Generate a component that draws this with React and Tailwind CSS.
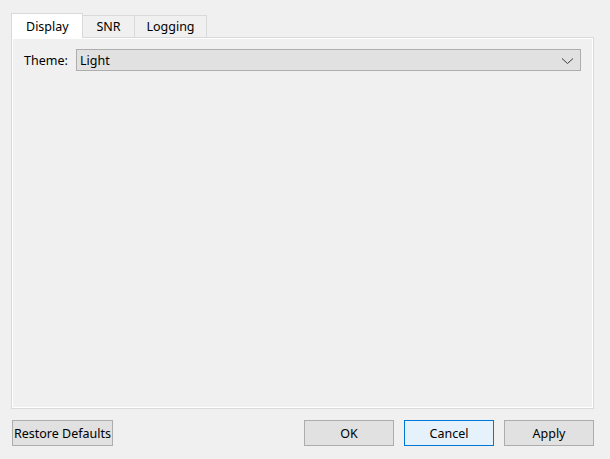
import { useState } from 'react';

const font = { fontFamily: '"Segoe UI", "Noto Sans", "Liberation Sans", sans-serif' };

function Tab({ label, active, onClick, className }) {
  if (active) {
    return (
      <button
        className={`relative z-10 -mb-px h-[25px] border border-b-0 border-[#d9d9d9] bg-white px-[14px] pt-[2px] text-[12.5px] text-black ${className}`}
        onClick={onClick}
      >
        {label}
      </button>
    );
  }
  return (
    <button
      className={`h-[22px] border-t border-r border-[#d9d9d9] bg-[#f0f0f0] pt-px text-[12.5px] text-black ${className}`}
      onClick={onClick}
    >
      {label}
    </button>
  );
}

function Button({ children, primary, className = '' }) {
  return (
    <button
      className={`h-[26px] border pt-[2px] text-[12.5px] text-black ${
        primary
          ? 'border-[#0078d7] bg-[#e5f1fb]'
          : 'border-[#adadad] bg-[#e1e1e1]'
      } ${className}`}
    >
      {children}
    </button>
  );
}

export default function App() {
  const [tab, setTab] = useState('Display');

  return (
    <div
      className="flex h-[459px] w-[610px] flex-col bg-[#f0f0f0] pt-[13px] pl-[11px] pr-[16px]"
      style={font}
    >
      <div className="flex items-end">
        <Tab
          label="Display"
          active={tab === 'Display'}
          onClick={() => setTab('Display')}
          className="w-[72px]"
        />
        <Tab
          label="SNR"
          active={tab === 'SNR'}
          onClick={() => setTab('SNR')}
          className="w-[52px]"
        />
        <Tab
          label="Logging"
          active={tab === 'Logging'}
          onClick={() => setTab('Logging')}
          className="w-[72px]"
        />
      </div>

      <div className="h-[372px] w-[583px] border border-[#d9d9d9]">
        <div className="h-full border border-white px-[11px] pt-[10px]">
          <div className="flex items-center">
            <span className="w-[52px] pt-[2px] text-[12.5px] text-black">Theme:</span>
            <div className="flex h-[22px] flex-1 items-center justify-between border border-[#adadad] bg-[#e1e1e1] pl-[3px] pr-[6px] pt-[2px] text-[12.5px] text-black">
              <span>Light</span>
              <svg width="13" height="8" viewBox="0 0 13 8" fill="none" className="-mt-[1px]">
                <path d="M1 1.5 L6.5 6.5 L12 1.5" stroke="#3c3c3c" strokeWidth="1" />
              </svg>
            </div>
          </div>
        </div>
      </div>

      <div className="mt-[11px] flex items-center">
        <Button className="ml-px w-[101px]">Restore Defaults</Button>
        <div className="ml-auto flex gap-[10px]">
          <Button className="w-[90px]">OK</Button>
          <Button primary className="w-[90px]">
            Cancel
          </Button>
          <Button className="w-[90px]">Apply</Button>
        </div>
      </div>
    </div>
  );
}
